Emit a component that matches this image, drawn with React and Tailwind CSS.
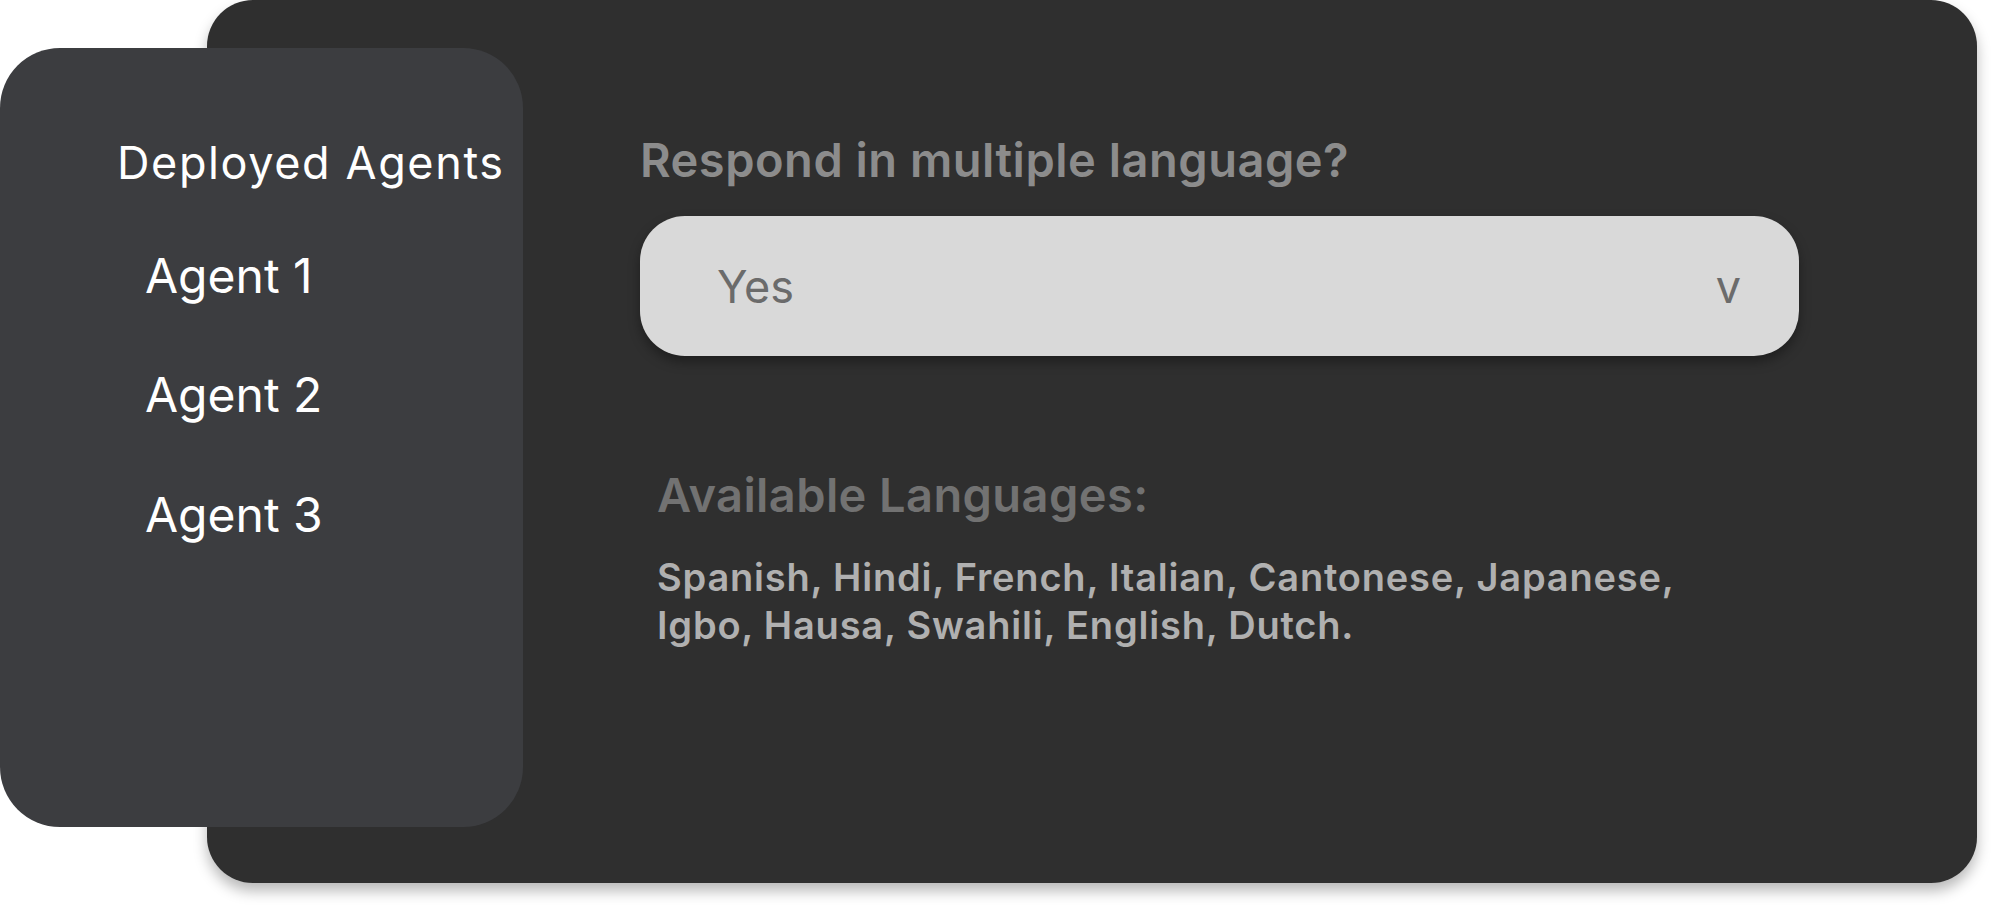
import { useState } from 'react';

const agents = ['Agent 1', 'Agent 2', 'Agent 3'];

const languages = [
  'Spanish, Hindi, French, Italian, Cantonese, Japanese,',
  'Igbo, Hausa, Swahili, English, Dutch.',
];

// ===== Sidebar =====
const Sidebar = () => (
  <aside className="relative z-10 mt-[48px] w-[523px] h-[779px] shrink-0 rounded-[60px] bg-[#3c3d40] pt-[92px] pl-[117px]">
    <h2 className="text-[45px] leading-none font-normal tracking-[1.6px] text-white whitespace-nowrap">Deployed Agents</h2>
    <ul className="mt-[66.5px] ml-[28px] flex flex-col gap-[71.5px]">
      {agents.map(a => (
        <li key={a} className="text-[48px] leading-none font-normal text-white">{a}</li>
      ))}
    </ul>
  </aside>
);

// ===== App =====
export default function App() {
  const [value] = useState('Yes');

  return (
    <div className="w-[1992px] h-[916px] bg-white flex items-start overflow-hidden font-['Inter','Liberation_Sans',sans-serif]">
      <Sidebar />

      {/* Panel principal */}
      <main className="-ml-[316px] w-[1770px] h-[883px] shrink-0 rounded-[46px] bg-[#2f2f2f] shadow-[0_8px_14px_rgba(0,0,0,0.28)] pt-[136px] pl-[433px]">
        <h1 className="text-[47px] leading-none font-semibold tracking-[0.5px] text-[#8c8c8c]">Respond in multiple language?</h1>

        {/* Select */}
        <div className="mt-[33px] w-[1159px] h-[140px] rounded-[45px] bg-[#d9d9d9] shadow-[0_6px_12px_rgba(0,0,0,0.35)] flex items-center justify-between pl-[77px] pr-[58px]">
          <span className="text-[45px] leading-none text-[#6b6b6b]">{value}</span>
          <span className="text-[45px] leading-none text-[#6b6b6b]">v</span>
        </div>

        <div className="ml-[17px] mt-[115px]">
          <h3 className="text-[47px] leading-none font-semibold tracking-[0.4px] text-[#727272]">Available Languages:</h3>
          <p className="mt-[35px] text-[38px] leading-[48px] font-semibold tracking-[0.8px] text-[#b0b0b0]">
            {languages[0]}<br />{languages[1]}
          </p>
        </div>
      </main>
    </div>
  );
}
